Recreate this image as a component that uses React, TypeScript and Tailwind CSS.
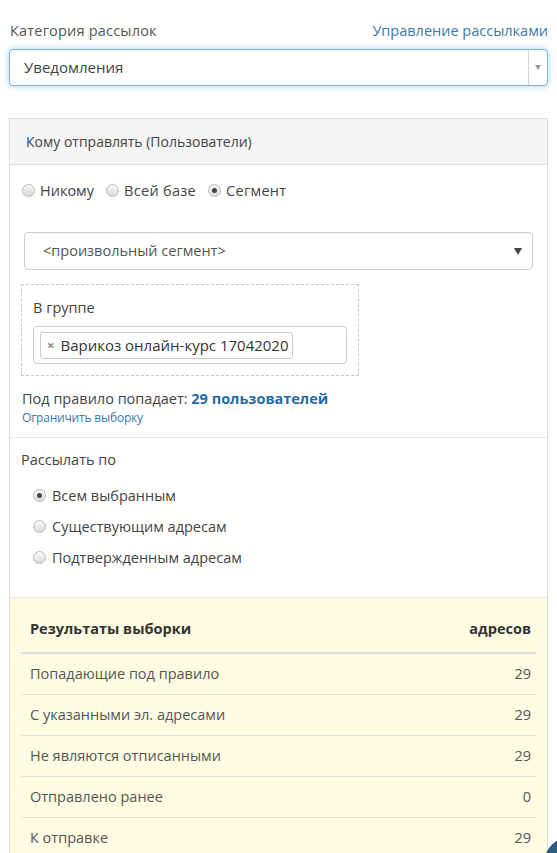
import React from 'react';

const font = { fontFamily: '"Open Sans", "Liberation Sans", sans-serif' };

function Radio({ checked = false }: { checked?: boolean }) {
  return (
    <span className="inline-flex items-center justify-center w-[13px] h-[13px] rounded-full border border-[#b8b8b8] bg-gradient-to-b from-[#fafafa] to-[#d9d9d9] shrink-0">
      {checked && <span className="w-[5px] h-[5px] rounded-full bg-[#444]" />}
    </span>
  );
}

const rows = [
  { name: 'Попадающие под правило', value: '29' },
  { name: 'С указанными эл. адресами', value: '29' },
  { name: 'Не являются отписанными', value: '29' },
  { name: 'Отправлено ранее', value: '0' },
  { name: 'К отправке', value: '29' },
];

export default function App() {
  return (
    <div className="min-h-screen bg-white text-[#555] text-[14px] px-[9px] pt-[20px]" style={font}>
      {/* Category */}
      <div className="flex items-center justify-between h-[22px] pl-[1px]">
        <span className="text-[14.5px] text-[#555] tracking-[0.2px]">Категория рассылок</span>
        <a className="text-[14.5px] text-[#3b78a8]">Управление рассылками</a>
      </div>
      <div className="mt-[7px] h-[37px] flex items-center rounded-[4px] border border-[#7ab5e6] shadow-[0_0_6px_rgba(102,175,233,0.6)] bg-white">
        <span className="flex-1 pl-[14px] text-[15px] text-[#444]">Уведомления</span>
        <span className="h-full w-[19px] border-l border-[#d4d4d4] flex items-center justify-center">
          <span className="w-0 h-0 border-l-[3.5px] border-r-[3.5px] border-t-[5px] border-l-transparent border-r-transparent border-t-[#999]" />
        </span>
      </div>

      {/* Panel */}
      <div className="mt-[32px] border border-[#ddd] border-b-0">
        <div className="h-[46px] bg-[#f5f5f5] border-b border-[#ddd] flex items-center px-[16px] text-[14px] text-[#444]">
          Кому отправлять (Пользователи)
        </div>

        <div className="px-[12px]">
          <div className="h-[50px] flex items-center pt-[1px] text-[14.5px] text-[#444]">
            <label className="flex items-center gap-[5px]"><Radio />Никому</label>
            <label className="flex items-center gap-[5px] ml-[12px] tracking-[0.3px]"><Radio />Всей базе</label>
            <label className="flex items-center gap-[5px] ml-[12px] tracking-[0.3px]"><Radio checked />Сегмент</label>
          </div>

          <div className="mt-[17px] mx-[2px] h-[38px] border border-[#ccc] rounded-[4px] flex items-center pl-[18px] pr-[10px] text-[14.5px] text-[#555]">
            <span className="flex-1">&lt;произвольный сегмент&gt;</span>
            <span className="w-0 h-0 border-l-[4px] border-r-[4px] border-t-[7px] border-l-transparent border-r-transparent border-t-[#444]" />
          </div>

          <div className="mt-[14px] w-[338px] -ml-[1px] border border-dashed border-[#c8c8c8] pt-[12px] pb-[11px] px-[11px]">
            <div className="text-[14.5px] text-[#444] leading-[22px]">В группе</div>
            <div className="mt-[7px] h-[38px] w-[314px] border border-[#ccc] rounded-[4px] flex items-center px-[6px]">
              <span className="h-[27px] flex items-center gap-[6px] border border-[#c8c8c8] rounded-[3px] bg-white pl-[6px] pr-[3px] text-[15px] text-[#333]">
                <span className="text-[#888] text-[13px] font-bold leading-none">×</span>
                Варикоз онлайн-курс 17042020
              </span>
            </div>
          </div>

          <div className="mt-[13px] text-[14.5px] text-[#444] leading-[20px]">
            Под правило попадает: <b className="text-[#1f6ba5] font-bold">29 пользователей</b>
          </div>
          <a className="block text-[12px] text-[#3b78a8] leading-[18px] tracking-[-0.2px]">Ограничить выборку</a>
        </div>

        <div className="mt-[10px] border-t border-[#e8e8e8] px-[11px] pt-[12px]">
          <div className="text-[14.5px] text-[#444] leading-[20px]">Рассылать по</div>
          <div className="mt-[15px] pl-[12px] flex flex-col gap-[10px] text-[14.5px] text-[#444]">
            <label className="flex items-center gap-[6px] h-[21px]"><Radio checked />Всем выбранным</label>
            <label className="flex items-center gap-[6px] h-[21px]"><Radio />Существующим адресам</label>
            <label className="flex items-center gap-[6px] h-[21px]"><Radio />Подтвержденным адресам</label>
          </div>
        </div>

        <div className="mt-[29px] border-t border-[#e6e6e6] bg-[#fefde3] px-[11px] pt-[8px] pb-[10px]">
          <table className="w-full border-collapse">
            <thead>
              <tr className="border-b-2 border-[#ddd]">
                <th className="h-[47px] text-left pl-[9px] text-[14.5px] font-bold text-[#333]">Результаты выборки</th>
                <th className="h-[47px] text-right pr-[5px] text-[14.5px] font-bold text-[#333]">адресов</th>
              </tr>
            </thead>
            <tbody>
              {rows.map((r, i) => (
                <tr key={r.name} className={i < rows.length - 1 ? 'border-b border-[#e2e2d8]' : ''}>
                  <td className="h-[41px] pl-[9px] text-[14.5px] text-[#555]">{r.name}</td>
                  <td className="h-[41px] pr-[5px] text-right text-[14.5px] text-[#555]">{r.value}</td>
                </tr>
              ))}
            </tbody>
          </table>
        </div>
      </div>

      {/* floating chat button, cut off at corner */}
      <div className="fixed left-[543px] top-[836px] w-[60px] h-[60px] rounded-full bg-[#2c5c80]" />
    </div>
  );
}
